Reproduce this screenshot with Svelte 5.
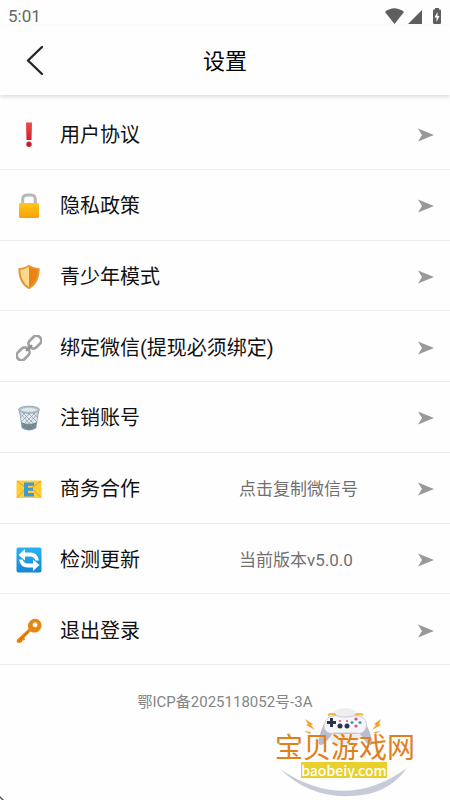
<script>
  const items = [
    { icon: 'alert', label: '用户协议' },
    { icon: 'lock', label: '隐私政策' },
    { icon: 'shield', label: '青少年模式' },
    { icon: 'link', label: '绑定微信(提现必须绑定)' },
    { icon: 'trash', label: '注销账号' },
    { icon: 'mail', label: '商务合作', value: '点击复制微信号' },
    { icon: 'sync', label: '检测更新', value: '当前版本v5.0.0' },
    { icon: 'key', label: '退出登录' }
  ];
</script>

<div class="app">
  <div class="status">
    <span>5:01</span>
    <svg width="58" height="18" viewBox="0 0 58 18" fill="#5e5e5e" aria-hidden="true">
      <path d="M1 5Q10-2.500 20 5L10.500 17Z" />
      <path d="M38 3V17H24Z" />
      <path fill-rule="evenodd" d="M51 1h4v1.500h1q1 0 1 1V16q0 1-1 1h-6q-1 0-1-1V3.500q0-1 1-1h1ZM53.500 5L50.500 10.500H52.500V15L55.500 9H53.500Z" />
    </svg>
  </div>

  <header>
    <button class="back" aria-label="返回">
      <svg width="18" height="32" viewBox="0 0 18 32" fill="none" stroke="#242629" stroke-width="2.400" stroke-linecap="round" stroke-linejoin="round"><path d="M16 2L2 15.500L16 29" /></svg>
    </button>
    <h1>设置</h1>
  </header>

  <main>
    <ul>
      {#each items as item}
        <li>
          <button class="row">
            <svg class="icon" viewBox="0 0 26 26" aria-hidden="true">
              {#if item.icon === 'alert'}
                <defs><linearGradient id="red" x2="0" y2="1"><stop stop-color="#f0494b" /><stop offset="1" stop-color="#cf202b" /></linearGradient></defs>
                <path d="M10 .5h6l-.5 17.500h-5Z" fill="url(#red)" />
                <circle cx="13" cy="22.300" r="2.700" fill="#c91f2a" />
              {:else if item.icon === 'lock'}
                <defs><linearGradient id="gold" x2="0" y2="1"><stop stop-color="#ffc51c" /><stop offset="1" stop-color="#faa006" /></linearGradient></defs>
                <path d="M6.700 12V6.500Q6.700 2 11 2h4Q19.300 2 19.300 6.500V12" fill="none" stroke="#b8b8b8" stroke-width="3" />
                <rect x="3" y="10" width="20" height="15" rx="1.500" fill="url(#gold)" />
              {:else if item.icon === 'shield'}
                <path d="M13 .7C10 3 6 4 2.300 4.200C2.500 14 5 21 13 25.300C21 21 23.500 14 23.700 4.200C20 4 16 3 13 .7Z" fill="#e99531" />
                <path d="M13 2.800Q9 5.500 4.300 5.900Q5 18 13 23Z" fill="#ffd98f" />
                <path d="M13 2.800Q17 5.500 21.700 5.900Q21 18 13 23Z" fill="#e78414" />
              {:else if item.icon === 'link'}
                <g transform="rotate(-45 13 13)" fill="none" stroke="#a3a3a3" stroke-width="2.800">
                  <rect x="-2.300" y="8.300" width="14" height="9.400" rx="4.400" />
                  <rect x="14.300" y="8.300" width="14" height="9.400" rx="4.400" />
                  <path d="M10 13h6" stroke="#929292" stroke-linecap="round" />
                </g>
              {:else if item.icon === 'trash'}
                <path d="M3 5L6 23Q13 27.500 20 23L23 5Z" fill="#e4eaed" />
                <path d="M5 17L6 23Q13 27.500 20 23L21 17Q13 21 5 17Z" fill="#71838d" />
                <path d="M3 7l15 17M6 7l14 14M11 7l10 10M16 7l6 6M23 7L8 24M20 7L6 21M15 7L5 17M10 7l-6 6M3.500 6l2.700 17Q13 27 19.800 23L22.500 6" fill="none" stroke="#8da2ad" stroke-width=".8" />
                <ellipse cx="13" cy="4.700" rx="10.500" ry="3.500" fill="#b3c2ca" stroke="#94a9b3" />
                <ellipse cx="13" cy="4.800" rx="8" ry="2" fill="#dde6ea" />
              {:else if item.icon === 'mail'}
                <rect x=".5" y="4.500" width="25" height="17.500" rx="1" fill="#ffcd36" />
                <path d="M1 5l12 9L25 5M1 21.500l8-8M25 21.500l-8-8" fill="none" stroke="#dfa321" />
                <path d="M8 6.500h10v3.300h-6v2h5v3h-5v2.300h6v3.400H8Z" fill="#3c9bd2" />
              {:else if item.icon === 'sync'}
                <defs><linearGradient id="blue" x2="0" y2="1"><stop stop-color="#27b4f3" /><stop offset="1" stop-color="#1686d2" /></linearGradient></defs>
                <rect x=".5" y=".5" width="25" height="25" rx="2" fill="url(#blue)" />
                <g fill="#fff">
                  <path d="M2.500 8L9 2V5.500H14.500Q21.500 5.500 23 13.500H19.500Q18 9.500 14 9.500H9V13.500Z" />
                  <path d="M23.500 18L17 24V20.500H11.500Q4.500 20.500 3 12.500H6.500Q8 16.500 12 16.500H17V12.500Z" />
                </g>
              {:else}
                <path fill="#e78612" fill-rule="evenodd" d="M13 4.500Q16 0 21 1Q26 3 25.500 8.500Q24 15 17 14.500L14.500 13.500L8.500 19.500L9 22L6.500 22.500L6 24L3.500 25L.7 24.500L1 21.500L12.500 11Q11 7.500 13 4.500ZM19 4.300A2.500 2.500 0 1 0 21.500 7.500Q21.500 4.500 19 4.300Z" />
                <path d="M3 23l9.500-9.500" stroke="#bf6410" />
              {/if}
            </svg>
            <span class="label">{item.label}</span>
            {#if item.value}<span class="value">{item.value}</span>{/if}
            <svg class="arrow" viewBox="0 0 16 14" aria-hidden="true"><path d="M0 .5L16 7L0 13.500L4 7Z" fill="#999" /></svg>
          </button>
        </li>
      {/each}
    </ul>
  </main>
  <footer>鄂ICP备2025118052号-3A</footer>

  <div class="watermark">
    <svg width="140" height="92" viewBox="0 0 140 92" aria-hidden="true">
      <circle cx="70" cy="20" r="19" fill="#eeeeef" />
      <path d="M5 62Q70 106 132 61Q112 89 75 89Q35 91 5 62Z" fill="#c7cad8" />
      <path d="M54 11Q61 7 67 10H73Q80 7 87 11Q92 16 97 32Q99 39 94 38Q89 34 85 27H57Q53 34 47 38Q42 39 44 31Q48 15 54 11Z" fill="#bbbdca" />
      <path d="M54 10Q61 7 67 10H74Q81 7 87 10Q93 14 91 21Q88 28 81 26H60Q52 28 49 21Q49 14 54 10Z" fill="#f5f5fa" stroke="#cccdd8" />
      <path d="M53 8q4-2 8 0M80 8q4-2 8 0" fill="none" stroke="#efb641" stroke-width="2" />
      <path d="M52 15.500h9M56.500 11v9" stroke="#29344d" stroke-width="3" />
      <g fill="#29344d"><circle cx="65" cy="19" r="2.500" /><circle cx="72" cy="19" r="2.500" /></g>
      <g fill="#e44d66"><circle cx="81" cy="12" r="1.600" /><circle cx="81" cy="19" r="1.600" /><circle cx="65" cy="14" r="1" /><circle cx="72" cy="14" r="1" /></g>
      <g fill="#3aa7c0"><circle cx="77" cy="15.500" r="1.600" /><circle cx="85" cy="15.500" r="1.600" /></g>
      <path d="M30 12l8 5-2 1 4 5-9-5 2-1ZM106 12l-7 5 2 1-4 5 9-5-2-1ZM29 24l7 1-1 2ZM106 24l-7 1 1 2Z" fill="#f1a62f" />
    </svg>
    <strong>宝贝游戏网</strong>
    <span class="site">baobeiy.com</span>
  </div>
  <svg class="corner" width="4" height="4" viewBox="0 0 4 4" aria-hidden="true"><path d="M0 0L4 4H2L0 2Z" fill="#555" /></svg>
</div>

<style>
  :global(body) { margin: 0; background: #fefefe; }
  .app {
    position: relative;
    display: flex;
    flex-direction: column;
    min-height: 100vh;
    font-family: Roboto, "Noto Sans CJK SC", sans-serif;
    color: #111;
  }
  button { border: 0; background: none; padding: 0; font: inherit; color: inherit; cursor: pointer; }
  svg { display: block; flex: none; }
  .status {
    display: flex;
    justify-content: space-between;
    align-items: center;
    padding: 6px 8px 0 8px;
    height: 20px;
    font-size: 17px;
    line-height: 20px;
    color: #666;
  }
  header {
    display: grid;
    grid-template-columns: 1fr auto 1fr;
    align-items: center;
    height: 69px;
    padding: 0 24px;
    box-shadow: 0 2px 4px #ddd;
  }
  .back { justify-self: start; padding: 0 2px; }
  h1 { margin: 0; padding-top: 2px; font-size: 22px; line-height: 32px; font-weight: 400; color: #000; }
  ul {
    display: grid;
    grid-auto-rows: 1fr;
    min-height: 566px;
    margin: 4px 0 0;
    padding: 0;
    list-style: none;
  }
  li { display: flex; border-bottom: 1px solid #eee; }
  .row {
    flex: 1;
    display: flex;
    align-items: center;
    padding: 3px 16px 0;
    text-align: left;
  }
  .icon { width: 26px; height: 26px; margin-right: 18px; }
  .label { flex: 1; font-size: 20px; line-height: 28px; }
  .value { width: 179px; font-size: 17px; line-height: 28px; color: #707070; }
  .arrow { width: 16px; height: 14px; }
  footer { padding-top: 27px; text-align: center; font-size: 15px; line-height: 20px; color: #858585; }
  .watermark { position: absolute; right: 35px; bottom: 1px; width: 140px; height: 92px; }
  strong {
    position: absolute;
    top: 29px;
    left: 0;
    font-size: 28px;
    line-height: 26px;
    font-weight: 400;
    white-space: nowrap;
    color: #e0801a;
  }
  .site {
    position: absolute;
    top: 55px;
    left: 26px;
    width: 86px;
    text-align: center;
    font: 500 14px/16px "Noto Sans CJK SC", sans-serif;
    color: #fff;
    background: #e9cf2c;
  }
  .corner { position: absolute; left: 0; bottom: 0; }
</style>
